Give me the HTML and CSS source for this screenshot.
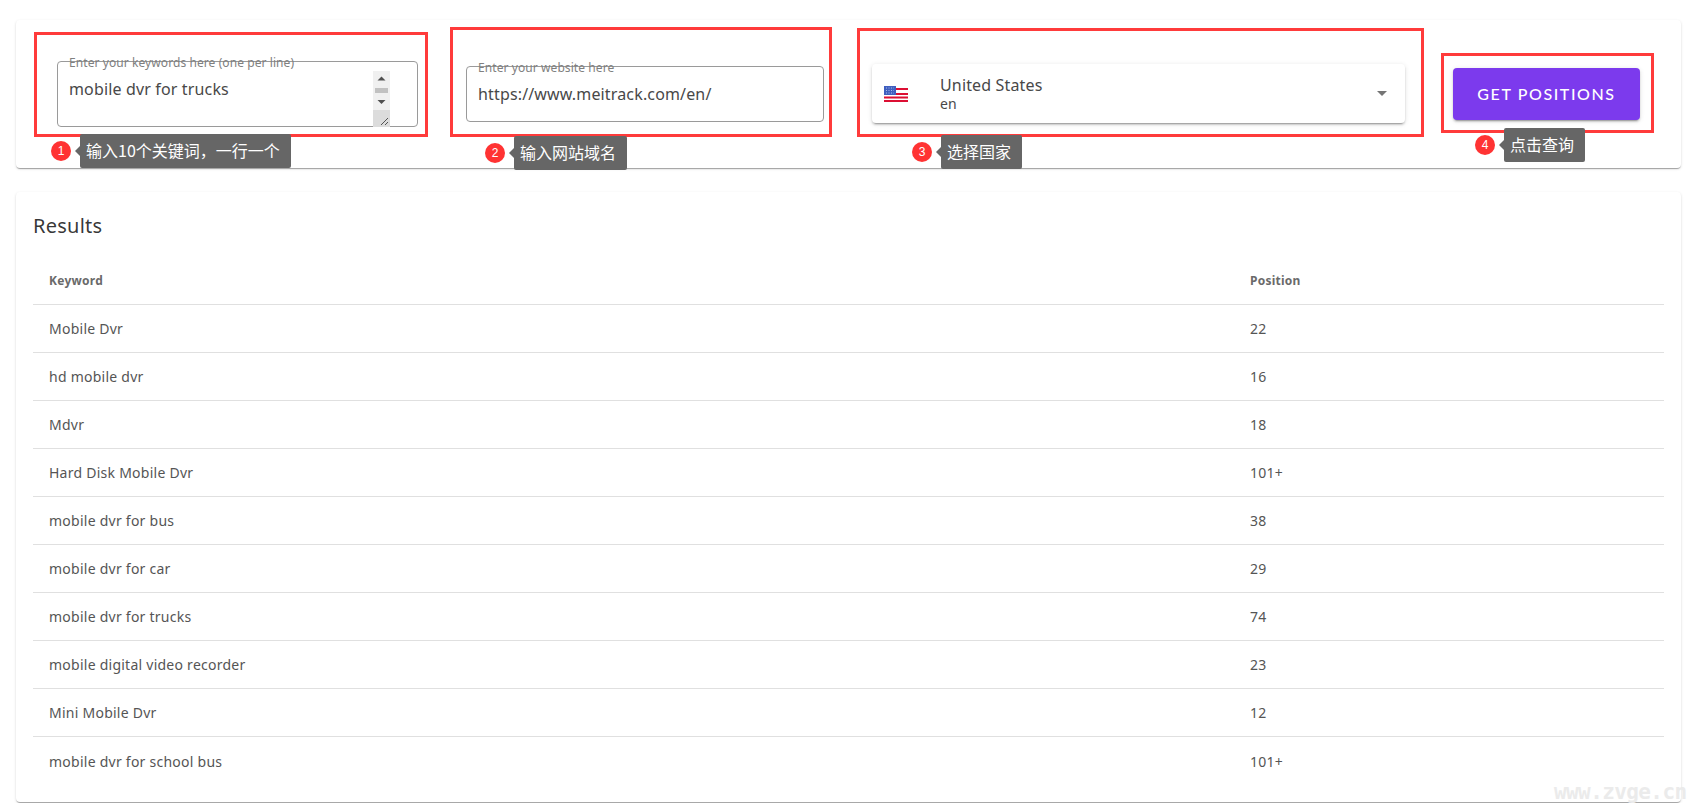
FILE: index.html
```html
<!DOCTYPE html>
<html lang="en">
<head>
<meta charset="utf-8">
<title>Keyword positions</title>
<link rel="stylesheet" href="styles.css">
</head>
<body>
<main class="page">
  <section class="card search">
    <div class="field field-keywords">
      <div class="outlined">
        <span class="legend">Enter your keywords here (one per line)</span>
        <div class="value value-top">mobile dvr for trucks</div>
        <svg class="scrollbar" width="17" height="56" viewBox="0 0 17 56" aria-hidden="true">
          <rect width="17" height="39" fill="#f0f0f0"/>
          <rect y="39" width="17" height="17" fill="#dcdcdc"/>
          <path d="M8.500 5.500l4 4h-8z" fill="#505050"/>
          <rect x="2" y="17" width="13" height="5" fill="#c1c1c1"/>
          <path d="M8.500 33l-4-4h8z" fill="#505050"/>
          <path d="M8 54l7-7M12 54l3-3" stroke="#555" stroke-width="1" fill="none"/>
        </svg>
      </div>
      <div class="frame frame-keywords"></div>
      <div class="note note-keywords"><span class="num">1</span><span class="tip">输入10个关键词，一行一个</span></div>
    </div>
    <div class="field field-site">
      <div class="outlined outlined-site">
        <span class="legend">Enter your website here</span>
        <div class="value">https://www.meitrack.com/en/</div>
      </div>
      <div class="frame frame-site"></div>
      <div class="note note-site"><span class="num">2</span><span class="tip">输入网站域名</span></div>
    </div>
    <div class="field field-country">
      <div class="select">
        <svg class="flag" width="24" height="16" viewBox="0 0 24 16" aria-hidden="true">
          <rect width="24" height="16" fill="#fff"/>
          <rect y="2" width="24" height="2" fill="#dc0f33"/>
          <rect y="7" width="24" height="2" fill="#dc0f33"/>
          <rect y="10.500" width="24" height="2" fill="#dc0f33"/>
          <rect y="14" width="24" height="2" fill="#dc0f33"/>
          <rect width="12" height="9" fill="#3f5fbf"/>
          <path d="M2 2h8M2 4.500h8M2 7h8" stroke="#a9b9ea" stroke-width="1" stroke-dasharray="1 1.500"/>
        </svg>
        <div class="country">
          <div class="country-name">United States</div>
          <div class="country-code">en</div>
        </div>
        <svg class="caret" width="10" height="5" viewBox="0 0 10 5" aria-hidden="true"><path d="M0 0h10L5 5z" fill="#757575"/></svg>
      </div>
      <div class="frame frame-country"></div>
      <div class="note note-country"><span class="num">3</span><span class="tip">选择国家</span></div>
    </div>
    <div class="field field-action">
      <button class="primary" type="button">GET POSITIONS</button>
      <div class="frame frame-action"></div>
      <div class="note note-action"><span class="num">4</span><span class="tip">点击查询</span></div>
    </div>
  </section>

  <section class="card results">
    <h2 class="title">Results</h2>
    <table class="table">
      <thead>
        <tr><th class="col-key">Keyword</th><th>Position</th></tr>
      </thead>
      <tbody>
        <tr><td>Mobile Dvr</td><td>22</td></tr>
        <tr><td>hd mobile dvr</td><td>16</td></tr>
        <tr><td>Mdvr</td><td>18</td></tr>
        <tr><td>Hard Disk Mobile Dvr</td><td>101+</td></tr>
        <tr><td>mobile dvr for bus</td><td>38</td></tr>
        <tr><td>mobile dvr for car</td><td>29</td></tr>
        <tr><td>mobile dvr for trucks</td><td>74</td></tr>
        <tr><td>mobile digital video recorder</td><td>23</td></tr>
        <tr><td>Mini Mobile Dvr</td><td>12</td></tr>
        <tr><td>mobile dvr for school bus</td><td>101+</td></tr>
      </tbody>
    </table>
  </section>
</main>
<div class="watermark">www.zvge.cn</div>
</body>
</html>
```
FILE: styles.css
```css
* { box-sizing: border-box; }
html, body { margin: 0; height: 100%; overflow: hidden; }
body {
  background: #fff;
  color: rgba(0, 0, 0, .87);
  font-family: "Noto Sans", "Noto Sans CJK SC", sans-serif;
  position: relative;
}
.page { padding: 20px 6px 0 16px; }
.card {
  background: #fff;
  border-radius: 4px;
  box-shadow: 0 2px 1px -1px rgba(0,0,0,.2), 0 1px 1px 0 rgba(0,0,0,.14), 0 1px 3px 0 rgba(0,0,0,.12);
}
.search {
  display: flex;
  align-items: center;
  gap: 48px;
  height: 148px;
  padding: 0 41px;
}
.field { position: relative; }
.field-keywords { width: 361px; }
.field-site { width: 358px; }
.field-country { width: 533px; margin-bottom: 1px; }
.field-action { width: 187px; }

.outlined {
  position: relative;
  height: 66px;
  border: 1px solid #9a9a9a;
  border-radius: 4px;
  padding: 0 11px;
}
.outlined-site { height: 56px; }
.legend {
  position: absolute;
  left: 11px;
  top: -7px;
  font-size: 12px;
  line-height: 16px;
  letter-spacing: .08px;
  color: #808080;
  white-space: nowrap;
}
.value {
  font-size: 16px;
  line-height: 24px;
  letter-spacing: .15px;
  padding-top: 15px;
  color: #484848;
  white-space: nowrap;
}
.scrollbar {
  position: absolute;
  right: 27px;
  top: 9px;
}

.select {
  display: flex;
  align-items: center;
  height: 59px;
  padding: 0 18px 0 12px;
  background: #fff;
  border-radius: 4px;
  box-shadow: 0 3px 1px -2px rgba(0,0,0,.2), 0 2px 2px 0 rgba(0,0,0,.14), 0 1px 5px 0 rgba(0,0,0,.12);
}
.flag { flex: none; }
.country { flex: 1; margin-left: 32px; padding-bottom: 2px; color: #484848; }
.country-name { font-size: 16px; line-height: 22px; letter-spacing: .15px; }
.country-code { font-size: 14px; line-height: 16px; }
.caret { flex: none; }

.primary {
  display: block;
  width: 187px;
  height: 52px;
  border: 0;
  border-radius: 4px;
  padding: 0 0 2px;
  background: #7c3aed;
  color: #fff;
  font-family: "Lato", sans-serif;
  font-size: 16px;
  font-weight: 500;
  letter-spacing: 1.600px;
  box-shadow: 0 3px 1px -2px rgba(0,0,0,.2), 0 2px 2px 0 rgba(0,0,0,.14), 0 1px 5px 0 rgba(0,0,0,.12);
}

.frame {
  position: absolute;
  border: 3px solid #ff3b3b;
  pointer-events: none;
}
.frame-keywords { left: -23px; right: -10px; top: -29px; bottom: -10px; }
.frame-site { left: -16px; right: -8px; top: -39px; bottom: -15px; }
.frame-country { left: -15px; right: -19px; top: -36px; bottom: -14px; }
.frame-action { left: -12px; right: -14px; top: -15px; bottom: -13px; }

.note {
  position: absolute;
  display: flex;
  align-items: center;
}
.note-keywords { left: -6px; top: 73px; }
.note-site { left: 19px; top: 70px; }
.note-country { left: 40px; top: 71px; }
.note-action { left: 22px; top: 60px; }
.num {
  width: 20px;
  height: 20px;
  border-radius: 50%;
  background: #ff3333;
  color: #fff;
  font-family: "Liberation Sans", sans-serif;
  font-size: 12px;
  line-height: 20px;
  text-align: center;
  margin-right: 9px;
}
.tip {
  position: relative;
  height: 34px;
  padding: 0 11px 0 6px;
  background: #666;
  border-radius: 2px;
  color: #fff;
  font-family: "Noto Sans CJK SC", sans-serif;
  font-size: 16px;
  line-height: 32px;
  white-space: nowrap;
}
.tip::before {
  content: "";
  position: absolute;
  left: -5px;
  top: 12px;
  border-style: solid;
  border-width: 5px 5px 5px 0;
  border-color: transparent #666 transparent transparent;
}

.results {
  margin-top: 24px;
  height: 610px;
  padding: 0 17px;
}
.title {
  margin: 0;
  padding-top: 20px;
  height: 65px;
  font-size: 20px;
  font-weight: 400;
  line-height: 28px;
  letter-spacing: .25px;
  color: rgba(0,0,0,.8);
}
.table {
  width: 100%;
  border-collapse: separate;
  border-spacing: 0;
  table-layout: fixed;
  font-size: 14px;
  letter-spacing: .25px;
  color: #555;
}
.table th, .table td {
  height: 48px;
  padding: 0 16px;
  text-align: left;
  border-bottom: 1px solid #e0e0e0;
}
.table th { font-size: 12px; font-weight: 700; color: #6a6a6a; }
.table tbody tr:last-child td { border-bottom: 0; }
.col-key { width: 1201px; }

.watermark {
  position: absolute;
  left: 1554px;
  top: 782px;
  font-family: "DejaVu Sans Mono", monospace;
  font-size: 21px;
  line-height: 20px;
  font-weight: 700;
  letter-spacing: -.6px;
  color: #ebebeb;
  white-space: nowrap;
}
```
